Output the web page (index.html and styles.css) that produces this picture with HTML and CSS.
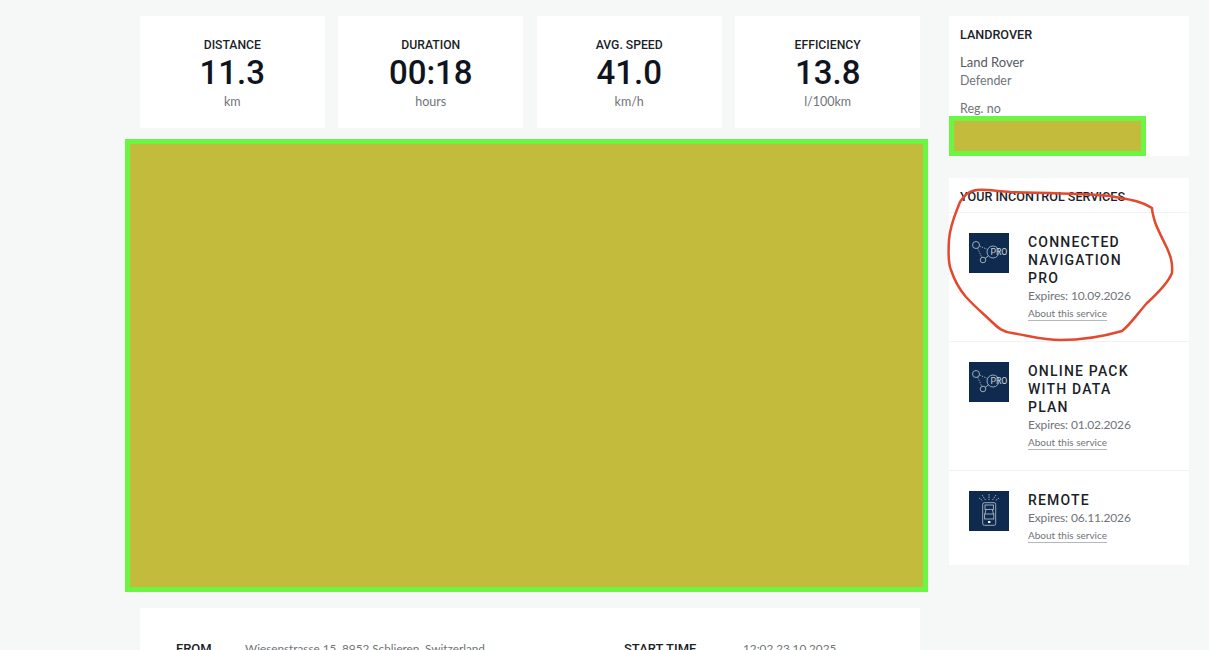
FILE: index.html
```html
<!DOCTYPE html>
<html>
<head>
    <meta charset="utf-8">
    <title>Trip details</title>
    <link rel="stylesheet" href="styles.css">
</head>
<body>
    <div class="page">
        <div class="main">
            <div class="tiles">
                <div class="tile">
                    <div class="tile-label">DISTANCE</div>
                    <div class="tile-value">11.3</div>
                    <div class="tile-unit">km</div>
                </div>
                <div class="tile">
                    <div class="tile-label">DURATION</div>
                    <div class="tile-value">00:18</div>
                    <div class="tile-unit">hours</div>
                </div>
                <div class="tile">
                    <div class="tile-label">AVG. SPEED</div>
                    <div class="tile-value">41.0</div>
                    <div class="tile-unit">km/h</div>
                </div>
                <div class="tile">
                    <div class="tile-label">EFFICIENCY</div>
                    <div class="tile-value">13.8</div>
                    <div class="tile-unit">l/100km</div>
                </div>
            </div>

            <div class="redact map"></div>

            <div class="trip">
                <div class="trip-col from">
                    <span class="trip-label">FROM</span>
                    <span class="trip-text">Wiesenstrasse 15, 8952 Schlieren, Switzerland</span>
                </div>
                <div class="trip-col start">
                    <span class="trip-label">START TIME</span>
                    <span class="trip-text">12:02 23.10.2025</span>
                </div>
            </div>
        </div>

        <div class="side">
            <div class="card vehicle">
                <h3 class="card-title">LANDROVER</h3>
                <div class="make">Land Rover</div>
                <div class="model">Defender</div>
                <div class="reg">Reg. no</div>
                <div class="redact plate"></div>
            </div>

            <div class="card services">
                <h3 class="card-title services-title">YOUR INCONTROL SERVICES</h3>

                <div class="service">
                    <svg class="service-icon" viewBox="0 0 40 40">
                        <use href="#icon-pro"></use>
                    </svg>
                    <div class="service-info">
                        <div class="service-name">CONNECTED NAVIGATION PRO</div>
                        <div class="service-exp">Expires: 10.09.2026</div>
                        <a class="service-link" href="#">About this service</a>
                    </div>
                </div>

                <div class="service">
                    <svg class="service-icon" viewBox="0 0 40 40">
                        <use href="#icon-pro"></use>
                    </svg>
                    <div class="service-info">
                        <div class="service-name">ONLINE PACK WITH DATA PLAN</div>
                        <div class="service-exp">Expires: 01.02.2026</div>
                        <a class="service-link" href="#">About this service</a>
                    </div>
                </div>

                <div class="service last">
                    <svg class="service-icon" viewBox="0 0 40 40">
                        <rect width="40" height="40" fill="#0e2a4e"/>
                        <g fill="none" stroke="#aab6c4" stroke-width="0.9">
                            <rect x="13.7" y="11.7" width="13" height="22.6" rx="1.6"/>
                            <rect x="16" y="14" width="8.4" height="4.4"/>
                            <path d="M17 18.4l-1 4.6M23.4 18.4l1 4.6"/>
                            <rect x="15.6" y="23" width="9.2" height="5"/>
                            <path d="M20 3v6M13 4l3.5 5M27 4l-3.5 5M10 7l3.5 2.5M30 7l-3.5 2.5" stroke-dasharray="1.6 0.8"/>
                        </g>
                        <rect x="19" y="30" width="2.4" height="2" fill="#fff"/>
                    </svg>
                    <div class="service-info">
                        <div class="service-name">REMOTE</div>
                        <div class="service-exp">Expires: 06.11.2026</div>
                        <a class="service-link" href="#">About this service</a>
                    </div>
                </div>
            </div>
        </div>
    </div>

    <!-- shared icon for the two nav services -->
    <svg class="defs" width="0" height="0">
        <symbol id="icon-pro" viewBox="0 0 40 40">
            <rect width="40" height="40" fill="#0e2a4e"/>
            <g fill="none" stroke="#aab6c4" stroke-width="0.9">
                <circle cx="7" cy="12" r="3.5"/>
                <circle cx="14" cy="27" r="2.8"/>
                <circle cx="24" cy="19" r="6"/>
                <path d="M10.4 13l8 3.4" stroke-dasharray="1.4 1.2"/>
                <path d="M8.6 15.2l4.2 9.2" stroke-dasharray="1.4 1.2"/>
                <path d="M16.2 25.3l3.4-2.5"/>
            </g>
            <text x="21.4" y="22.2" class="pro-text">PRO</text>
        </symbol>
    </svg>

    <!-- red marker drawn round the first service -->
    <svg class="scribble" viewBox="0 0 1209 650">
        <path d="M1152 208 C1140 200 1125 199 1110 196 C1080 193 1040 193 1010 192 C995 191 985 189 977 190 C968 191 964 196 960 202 C955 215 950 225 949 240 C948 255 949 265 951 270 C955 282 960 290 966 297 C975 307 985 315 992 322 C998 328 1003 332 1012 333 C1030 336 1045 340 1060 340 C1080 340 1105 336 1122 331 C1130 325 1138 313 1147 303 C1158 293 1168 283 1172 273 C1173 262 1170 255 1167 248 C1162 238 1157 228 1155 222 C1153 215 1152 212 1152 208" fill="none" stroke="#e2492f" stroke-width="2.5" stroke-linecap="round"/>
    </svg>
</body>
</html>
```

FILE: styles.css
```css
/*page*/
html {
    overflow: hidden;
}

body {
    margin: 0;
    height: 650px;
    overflow: hidden;
    background-color: #f6f8f7;
    font-family: 'Lato', sans-serif;
    color: #6f747a;
}

.page {
    display: flex;
    align-items: flex-start;
    padding: 16px 20px 0 140px;
    gap: 29px;
}

.main {
    width: 780px;
}

.side {
    width: 240px;
}

/*top tiles*/
.tiles {
    display: grid;
    grid-template-columns: repeat(4, 1fr);
    gap: 13.8px;
}

.tile {
    height: 112px;
    padding-top: 21px;
    box-sizing: border-box;
    background-color: #fff;
    text-align: center;
}

.tile-label {
    font-family: 'Roboto', sans-serif;
    font-size: 12.2px;
    font-weight: 500;
    line-height: 16px;
    color: #1b1f2a;
}

.tile-value {
    font-family: 'Roboto', sans-serif;
    font-size: 33px;
    font-weight: 500;
    line-height: 40px;
    color: #10141d;
}

.tile-unit {
    font-size: 12.5px;
    line-height: 18px;
}

/*redacted blocks*/
.redact {
    box-sizing: border-box;
    border: 5px solid #6cf644;
    background-color: #c3bb3c;
}

.map {
    height: 453px;
    margin: 11px -8px 0 -15px;
}

.plate {
    width: 197px;
    height: 40px;
}

/*trip details under the map*/
.trip {
    display: flex;
    height: 120px;
    margin-top: 16px;
    padding: 33px 36px 0;
    background-color: #fff;
    font-size: 11.75px;
    line-height: 16px;
}

.trip-col {
    display: flex;
}

.from {
    width: 448px;
}

.trip-label {
    font-family: 'Roboto', sans-serif;
    font-size: 13px;
    font-weight: 500;
    color: #1b1f2a;
}

.from .trip-label {
    width: 69px;
}

.start .trip-label {
    width: 119px;
}

/*side cards*/
.card {
    background-color: #fff;
}

.card-title {
    margin: 0;
    padding: 11px 11px 0;
    font-family: 'Roboto', sans-serif;
    font-size: 12.6px;
    font-weight: 500;
    line-height: 16px;
    color: #1b1f2a;
}

.vehicle {
    height: 140px;
}

.make {
    padding: 10px 11px 0;
    font-size: 13px;
    line-height: 18px;
    color: #55595f;
}

.model {
    padding: 1px 11px 0;
    font-size: 12.4px;
    line-height: 18px;
}

.reg {
    padding: 11px 11px 0;
    font-size: 12.5px;
    line-height: 15px;
}

.services {
    height: 387px;
    margin-top: 22px;
}

.services-title {
    height: 35px;
    box-sizing: border-box;
    border-bottom: 1px solid #f1f3f2;
}

.service {
    display: flex;
    height: 129px;
    box-sizing: border-box;
    padding: 20px 20px 0;
    gap: 19px;
    border-bottom: 1px solid #f1f3f2;
}

.service.last {
    height: 94px;
    border-bottom: none;
}

.service-icon {
    flex: none;
    width: 40px;
    height: 40px;
}

.service-info {
    width: 110px;
    flex: 1;
}

.service-name {
    width: 112px;
    font-family: 'Roboto', sans-serif;
    font-size: 14px;
    font-weight: 500;
    line-height: 18px;
    letter-spacing: 1.2px;
    color: #1b1f2a;
}

.service-exp {
    font-size: 12px;
    line-height: 18px;
    letter-spacing: -0.15px;
}

.service-link {
    display: block;
    width: fit-content;
    margin-top: 2px;
    font-size: 10px;
    line-height: 13px;
    color: #6f747a;
    text-decoration: none;
    border-bottom: 1px solid #b5b8bb;
}

.pro-text {
    font-family: 'Roboto', sans-serif;
    font-size: 8.8px;
    fill: #c9d1da;
}

/*overlays*/
.defs {
    position: absolute;
}

.scribble {
    position: absolute;
    left: 0;
    top: 0;
    width: 1209px;
    height: 650px;
    pointer-events: none;
}
```
